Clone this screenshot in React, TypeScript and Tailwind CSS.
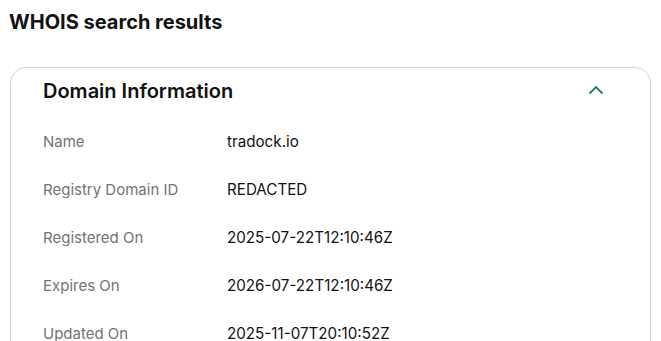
import React from "react";

const rows: [string, string][] = [
  ["Name", "tradock.io"],
  ["Registry Domain ID", "REDACTED"],
  ["Registered On", "2025-07-22T12:10:46Z"],
  ["Expires On", "2026-07-22T12:10:46Z"],
  ["Updated On", "2025-11-07T20:10:52Z"],
];

export default function App() {
  return (
    <div className="min-h-screen bg-white text-[#111111]" style={{ fontFamily: "Inter, 'Noto Sans', sans-serif" }}>
      <div className="pl-[9px] pr-[10px] pt-[10px]">
        <h1 className="text-[20px] leading-[24px] font-bold text-[#111111]">WHOIS search results</h1>
        <div className="mt-[33px] rounded-[16px] border border-[#d4d4d4] ml-px pl-[32px] pr-[46px] pt-[9px]">
          <div className="flex items-center justify-between h-[28px]">
            <h2 className="text-[20px] font-semibold leading-[28px]">Domain Information</h2>
            <svg width="16" height="10" viewBox="0 0 16 10" className="mt-[-2px]">
              <path d="M1.5 8.5 L8 2 L14.5 8.5" fill="none" stroke="#1b7a7a" strokeWidth="1.8" />
            </svg>
          </div>
          <div className="mt-[13px] flex flex-col">
            {rows.map(([k, v]) => (
              <div key={k} className="flex items-center h-[48px]">
                <div className="w-[184px] text-[15px] text-[#737373]">{k}</div>
                <div className="text-[15.2px] text-[#111111]">{v}</div>
              </div>
            ))}
          </div>
        </div>
      </div>
    </div>
  );
}
